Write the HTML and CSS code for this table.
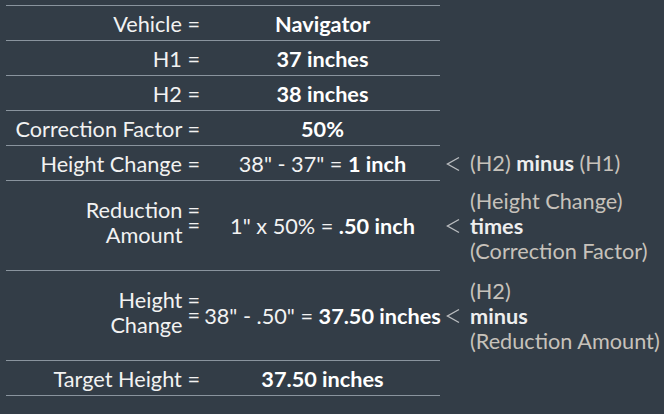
FILE: index.html
```html
<!DOCTYPE html>
<html>
<head>
<meta charset="utf-8">
<link rel="stylesheet" href="styles.css">
</head>
<body>
<div class="calc">
  <div class="row">
    <div class="label">Vehicle =</div>
    <div class="value"><b>Navigator</b></div>
    <div class="note"></div>
  </div>
  <div class="row">
    <div class="label">H1 =</div>
    <div class="value"><b>37 inches</b></div>
    <div class="note"></div>
  </div>
  <div class="row">
    <div class="label">H2 =</div>
    <div class="value"><b>38 inches</b></div>
    <div class="note"></div>
  </div>
  <div class="row">
    <div class="label">Correction Factor =</div>
    <div class="value"><b>50%</b></div>
    <div class="note"></div>
  </div>
  <div class="row">
    <div class="label">Height Change =</div>
    <div class="value">38" - 37" = <b>1 inch</b></div>
    <div class="note">
      <svg class="lt" viewBox="0 0 14 16" width="14" height="16"><polyline points="13,1.5 1.5,8 13,14.5"/></svg>
      <div class="note-text">(H2) <b>minus</b> (H1)</div>
    </div>
  </div>
  <div class="row tall">
    <div class="label">
      <div class="words">Reduction<br>Amount</div>
      <div class="eqs"><span>=</span><span>=</span></div>
    </div>
    <div class="value">1" x 50% = <b>.50 inch</b></div>
    <div class="note">
      <svg class="lt" viewBox="0 0 14 16" width="14" height="16"><polyline points="13,1.5 1.5,8 13,14.5"/></svg>
      <div class="note-text">(Height Change)<br><b>times</b><br>(Correction Factor)</div>
    </div>
  </div>
  <div class="row tall">
    <div class="label">
      <div class="words">Height<br>Change</div>
      <div class="eqs"><span>=</span><span>=</span></div>
    </div>
    <div class="value">38" - .50" = <b>37.50 inches</b></div>
    <div class="note">
      <svg class="lt" viewBox="0 0 14 16" width="14" height="16"><polyline points="13,1.5 1.5,8 13,14.5"/></svg>
      <div class="note-text">(H2)<br><b>minus</b><br>(Reduction Amount)</div>
    </div>
  </div>
  <div class="row">
    <div class="label">Target Height =</div>
    <div class="value"><b>37.50 inches</b></div>
    <div class="note"></div>
  </div>
</div>
</body>
</html>
```

FILE: styles.css
```css
html, body {
  margin: 0;
  padding: 0;
  background: #333d47;
}
body {
  font-family: Lato, "Open Sans", sans-serif;
  font-size: 21.7px;
  color: #f2f2f2;
}
.calc {
  padding: 5px 0 0 6px;
  display: grid;
  grid-template-columns: 199px 235px 1fr;
}
.row {
  display: contents;
}
.label, .value {
  border-bottom: 1px solid #8a949e;
  height: 32px;
  padding-top: 2px;
  display: flex;
  align-items: center;
}
.row:first-child .label, .row:first-child .value {
  border-top: 1px solid #8a949e;
}
.row.tall .label, .row.tall .value {
  height: 89px;
  padding-top: 0;
}
.label {
  justify-content: flex-end;
  padding-right: 5px;
  white-space: nowrap;
}
.value {
  justify-content: center;
  white-space: pre;
}
.value b {
  font-weight: 700;
  color: #ffffff;
}
.words {
  text-align: right;
  line-height: 25px;
  margin-top: -6px;
}
.eqs {
  display: flex;
  flex-direction: column;
  line-height: 15px;
  padding-bottom: 15px;
  margin-left: 5px;
}
.note {
  display: flex;
  align-items: center;
  padding-left: 6px;
  color: #c7c2bb;
  white-space: nowrap;
}
.lt {
  flex: none;
  fill: none;
  stroke: #b9bcbf;
  stroke-width: 1.4;
  margin-right: 10px;
}
.note-text {
  line-height: 25px;
}
.note-text b {
  font-weight: 700;
  color: #eeeeee;
}
```
